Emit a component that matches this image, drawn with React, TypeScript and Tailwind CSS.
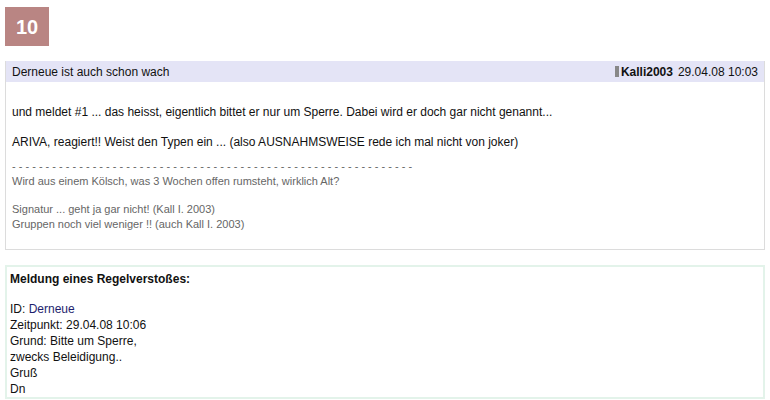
import React from 'react';

const font = "font-['Liberation_Sans',Arial,sans-serif]";
const dashes = '- - - - - - - - - - - - - - - - - - - - - - - - - - - - - - - - - - - - - - - - - - - - - - - - - - - - - - - - - - - -';

function PostHeader() {
  return (
    <div className="flex items-center justify-between h-[21px] bg-[#e4e4f6] px-[6px] text-[12px] text-[#111]">
      <span>Derneue ist auch schon wach</span>
      <span className="flex items-center">
        <span className="inline-block w-[4px] h-[11px] bg-[#888] mr-[2px]" />
        <span className="font-bold">Kalli2003</span>
        <span className="ml-[5px]">29.04.08 10:03</span>
      </span>
    </div>
  );
}

export default function App() {
  return (
    <div className={`${font} bg-white w-[770px] h-[400px] overflow-hidden px-[5px] pt-[7px]`}>
      <div className="w-[44px] h-[39px] bg-[#b98583] text-white font-bold text-[20px] flex items-center justify-center">
        10
      </div>

      <div className="mt-[15px] border border-t-0 border-[#dcdcdc]">
        <PostHeader />
        <div className="px-[6px] pt-[23px] pb-[17px] text-[12px] text-[#111]">
          <p className="leading-[15px]">
            und meldet #1 ... das heisst, eigentlich bittet er nur um Sperre. Dabei wird er doch gar nicht genannt...
          </p>
          <p className="leading-[15px] mt-[15px]">
            ARIVA, reagiert!! Weist den Typen ein ... (also AUSNAHMSWEISE rede ich mal nicht von joker)
          </p>
          <div className="mt-[9px] text-[11px] text-[#666] leading-[15px]">
            <div>{dashes}</div>
            <div>Wird aus einem Kölsch, was 3 Wochen offen rumsteht, wirklich Alt?</div>
            <div className="mt-[13px]">Signatur ... geht ja gar nicht! (Kall I. 2003)</div>
            <div>Gruppen noch viel weniger !! (auch Kall I. 2003)</div>
          </div>
        </div>
      </div>

      <div className="mt-[15px] border-2 border-[#e3f3ea] px-[3px] pt-[4px] pb-0 text-[12px] text-[#111] leading-[16px]">
        <div className="font-bold">Meldung eines Regelverstoßes:</div>
        <div className="mt-[14px]">
          ID: <span className="text-[#1e1e6e]">Derneue</span>
        </div>
        <div>Zeitpunkt: 29.04.08 10:06</div>
        <div>Grund: Bitte um Sperre,</div>
        <div>zwecks Beleidigung..</div>
        <div>Gruß</div>
        <div>Dn</div>
      </div>
    </div>
  );
}
